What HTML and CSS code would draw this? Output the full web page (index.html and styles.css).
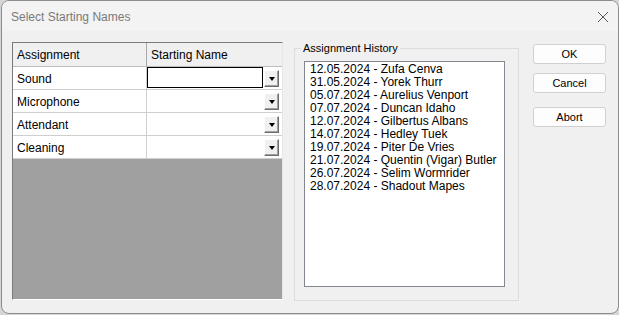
FILE: index.html
```html
<!DOCTYPE html>
<html>
<head>
<meta charset="utf-8">
<link rel="stylesheet" href="styles.css">
</head>
<body>
<div class="window">
  <div class="titlebar">
    <span class="title">Select Starting Names</span>
    <svg class="close" width="12" height="12" viewBox="0 0 12 12"><path d="M1 1L11 11M11 1L1 11" stroke="#555" stroke-width="1" fill="none"/></svg>
  </div>
  <div class="client">
    <div class="grid">
      <div class="row head">
        <div class="c1">Assignment</div>
        <div class="c2">Starting Name</div>
      </div>
      <div class="row">
        <div class="c1">Sound</div>
        <div class="c2"><div class="val sel"></div><div class="dd"><span></span></div></div>
      </div>
      <div class="row">
        <div class="c1">Microphone</div>
        <div class="c2"><div class="val"></div><div class="dd"><span></span></div></div>
      </div>
      <div class="row">
        <div class="c1">Attendant</div>
        <div class="c2"><div class="val"></div><div class="dd"><span></span></div></div>
      </div>
      <div class="row">
        <div class="c1">Cleaning</div>
        <div class="c2"><div class="val"></div><div class="dd"><span></span></div></div>
      </div>
      <div class="empty"></div>
    </div>
    <div class="group">
      <div class="legend">Assignment History</div>
      <div class="list">
        <div>12.05.2024 - Zufa Cenva</div>
        <div>31.05.2024 - Yorek Thurr</div>
        <div>05.07.2024 - Aurelius Venport</div>
        <div>07.07.2024 - Duncan Idaho</div>
        <div>12.07.2024 - Gilbertus Albans</div>
        <div>14.07.2024 - Hedley Tuek</div>
        <div>19.07.2024 - Piter De Vries</div>
        <div>21.07.2024 - Quentin (Vigar) Butler</div>
        <div>26.07.2024 - Selim Wormrider</div>
        <div>28.07.2024 - Shadout Mapes</div>
      </div>
    </div>
    <div class="buttons">
      <div class="btn ok">OK</div>
      <div class="btn cancel">Cancel</div>
      <div class="btn abort">Abort</div>
    </div>
  </div>
</div>
</body>
</html>
```
FILE: styles.css
```css
html, body {
  margin: 0;
  padding: 0;
}
body {
  background: #d6d6d6;
  width: 619px;
  height: 315px;
  overflow: hidden;
  font-family: "Liberation Sans", Arial, sans-serif;
  font-size: 12px;
  color: #000;
}
.window {
  margin-left: 1px;
  width: 618px;
  height: 314px;
  box-sizing: border-box;
  border: 1px solid #8c8c8c;
  border-radius: 8px;
  background: #f0f0f0;
  overflow: hidden;
}
.titlebar {
  height: 30px;
  background: #f3f3f3;
  display: flex;
  align-items: center;
  padding-left: 9px;
  padding-right: 9px;
}
.title {
  font-size: 12px;
  color: #7a7a7a;
  flex: 1;
  padding-top: 1px;
}
.close {
  margin-top: 1px;
}
.client {
  display: flex;
  align-items: flex-start;
  padding: 11px 0 0 10px;
}
.grid {
  width: 271px;
  height: 258px;
  box-sizing: border-box;
  border-top: 1px solid #7a7a7a;
  border-left: 1px solid #7a7a7a;
  border-right: 1px solid #e6e6e6;
  border-bottom: 1px solid #ffffff;
  display: flex;
  flex-direction: column;
}
.row {
  display: flex;
  height: 22px;
  flex-shrink: 0;
  background: #fff;
  border-bottom: 1px solid #cfcfcf;
}
.row.head {
  height: 23px;
  background: #f0f0f0;
  border-bottom: 1px solid #bdbdbd;
}
.c1, .c2 {
  display: flex;
  align-items: center;
}
.c1 {
  width: 134px;
  flex-shrink: 0;
  padding-left: 4px;
  padding-top: 1px;
  box-sizing: border-box;
  border-right: 1px solid #cfcfcf;
}
.head .c1 {
  border-right-color: #a9a9a9;
}
.c2 {
  width: 134px;
  flex-shrink: 0;
  box-sizing: border-box;
  padding-right: 2px;
}
.head .c2 {
  padding-left: 4px;
  padding-top: 1px;
}
.val {
  width: 116px;
  height: 21px;
  flex-shrink: 0;
  box-sizing: border-box;
  align-self: flex-start;
}
.val.sel {
  border: 1px solid #000;
}
.dd {
  margin-left: auto;
  width: 15px;
  height: 17px;
  flex-shrink: 0;
  box-sizing: border-box;
  background: #f0f0f0;
  border-top: 1px solid #ffffff;
  border-left: 1px solid #ffffff;
  border-right: 1px solid #6d6d6d;
  border-bottom: 1px solid #6d6d6d;
  box-shadow: inset -1px -1px 0 #a0a0a0;
  display: flex;
  align-items: center;
  justify-content: center;
}
.dd span {
  width: 0;
  height: 0;
  border-left: 3.5px solid transparent;
  border-right: 3.5px solid transparent;
  border-top: 4px solid #000;
  margin-top: 1px;
}
.empty {
  flex: 1;
  background: #a0a0a0;
}
.group {
  margin-left: 11px;
  margin-top: 6px;
  width: 225px;
  height: 253px;
  box-sizing: border-box;
  border: 1px solid #dcdcdc;
}
.legend {
  font-size: 11px;
  line-height: 13px;
  width: fit-content;
  margin: -7px 0 0 6px;
  padding: 0 2px;
  background: #f0f0f0;
}
.list {
  margin: 6px 0 0 9px;
  width: 201px;
  height: 226px;
  box-sizing: border-box;
  border: 1px solid #828790;
  background: #fff;
  padding: 1px 0 0 5px;
  line-height: 13px;
  font-size: 12px;
}
.buttons {
  margin-left: 14px;
  margin-top: 2px;
  display: flex;
  flex-direction: column;
}
.btn {
  width: 73px;
  height: 20px;
  box-sizing: border-box;
  border: 1px solid #d0d0d0;
  border-radius: 3px;
  background: #fdfdfd;
  font-size: 11px;
  display: flex;
  align-items: center;
  justify-content: center;
}
.cancel {
  margin-top: 9px;
}
.abort {
  margin-top: 14px;
}
```
